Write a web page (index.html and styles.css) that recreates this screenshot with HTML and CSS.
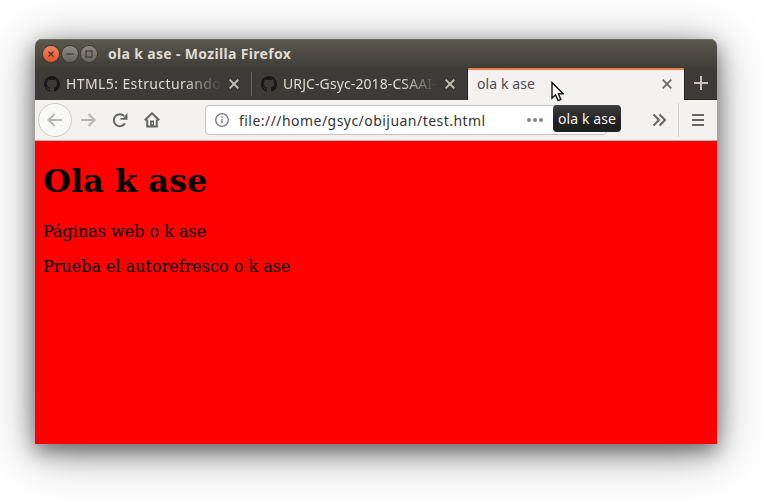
FILE: index.html
```html
<!DOCTYPE html>
<html lang="es">
<head>
<meta charset="utf-8">
<title>ola k ase</title>
<link rel="stylesheet" href="styles.css">
</head>
<body>
<svg width="0" height="0" class="defs">
  <symbol id="github" viewBox="0 0 16 16"><path d="M8 0C3.58 0 0 3.58 0 8c0 3.54 2.29 6.53 5.47 7.59.4.07.55-.17.55-.38 0-.19-.01-.82-.01-1.49-2.01.37-2.53-.49-2.69-.94-.09-.23-.48-.94-.82-1.13-.28-.15-.68-.52-.01-.53.63-.01 1.08.58 1.23.82.72 1.21 1.87.87 2.33.66.07-.52.28-.87.51-1.07-1.78-.2-3.64-.89-3.64-3.95 0-.87.31-1.59.82-2.15-.08-.2-.36-1.02.08-2.12 0 0 .67-.21 2.2.82.64-.18 1.32-.27 2-.27s1.36.09 2 .27c1.53-1.04 2.2-.82 2.2-.82.44 1.1.16 1.92.08 2.12.51.56.82 1.27.82 2.15 0 3.07-1.87 3.75-3.65 3.95.29.25.54.73.54 1.48 0 1.07-.01 1.93-.01 2.2 0 .21.15.46.55.38A8.01 8.01 0 0 0 16 8c0-4.42-3.58-8-8-8z"/></symbol>
  <symbol id="close" viewBox="0 0 10 10"><path d="M.7.7l8.600 8.600M9.300.7L.7 9.300" fill="none" stroke="currentColor" stroke-width="1.800"/></symbol>
</svg>
<div class="window">
  <header class="titlebar">
    <span class="btn btn-close"><svg width="16" height="16"><path d="M5.500 5.500l5 5M10.500 5.500l-5 5"/></svg></span>
    <span class="btn"><svg width="16" height="16"><path d="M4.500 8h7"/></svg></span>
    <span class="btn"><svg width="16" height="16"><rect x="5" y="5" width="6" height="6"/></svg></span>
    <h2 class="title">ola k ase - Mozilla Firefox</h2>
  </header>
  <nav class="tabs">
    <div class="tab">
      <svg class="fav"><use href="#github"/></svg>
      <span class="label label-html">HTML5: Estructurando</span>
      <svg class="x"><use href="#close"/></svg>
    </div>
    <div class="tab tab-second">
      <svg class="fav"><use href="#github"/></svg>
      <span class="label label-urjc">URJC-Gsyc-2018-CSAAI-</span>
      <svg class="x"><use href="#close"/></svg>
    </div>
    <div class="tab active">
      <span class="label">ola k ase</span>
      <svg class="x"><use href="#close"/></svg>
    </div>
    <div class="newtab"><svg width="14" height="14"><path d="M7 0v14M0 7h14" stroke="#c8c3bf" stroke-width="2"/></svg></div>
  </nav>
  <div class="toolbar">
    <span class="back"><svg class="ico faded" viewBox="0 0 16 16"><path d="M15 8H1.500M7.500 2l-6 6 6 6"/></svg></span>
    <svg class="ico faded fwd" viewBox="0 0 16 16"><path d="M1 8h13.500M8.500 2l6 6-6 6"/></svg>
    <svg class="ico reload" viewBox="0 0 16 16"><path d="M13 11.200A6 6 0 1 1 12.200 4"/><path class="solid" d="M15.500.8v7H8.500V6h2.800z"/></svg>
    <svg class="ico home" viewBox="0 0 16 16"><path d="M.8 8.300L8 1.300l7.200 7M3.200 7.500V14.500h9.600V7.500"/><path class="solid" d="M6 8.500h4V15H6z"/><path class="door" d="M8.300 10.500v1.800"/></svg>
    <div class="url">
      <svg class="info" viewBox="0 0 14 14"><circle cx="7" cy="7" r="6.300"/><path d="M7 6v4.500M7 3.300v1.500"/></svg>
      <span class="address">file:///home/gsyc/obijuan/test.html</span>
      <svg class="dots" width="16" height="4"><circle cx="2" cy="2" r="2"/><circle cx="8" cy="2" r="2"/><circle cx="14" cy="2" r="2"/></svg>
    </div>
    <svg class="ico more" viewBox="0 0 14 14"><path d="M1.500 1.500L7 7l-5.500 5.500M7.500 1.500L13 7l-5.500 5.500"/></svg>
    <span class="divider"></span>
    <svg class="menu" width="12" height="12"><path d="M0 1h12M0 6h12M0 11h12"/></svg>
  </div>
  <main class="page">
    <h1>Ola k ase</h1>
    <p>Páginas web o k ase</p>
    <p>Prueba el autorefresco o k ase</p>
  </main>
  <div class="tooltip">ola k ase</div>
  <svg class="cursor" width="13" height="21" viewBox="0 0 13 21"><path d="M1 1.500v15.700l3.500-3.300 2.700 5.700 2.700-1.200-2.500-5.500h4.800z"/></svg>
</div>
</body>
</html>
```
FILE: styles.css
```css
* { box-sizing: border-box; }
body {
  margin: 0;
  height: 502px;
  padding: 39px 45px 58px 35px;
  background: #fff;
  overflow: hidden;
  font-family: "Noto Sans", sans-serif;
}
.defs { position: absolute; }
svg { display: block; flex: none; }
.window {
  position: relative;
  display: flex;
  flex-direction: column;
  width: 682px;
  height: 405px;
  border-radius: 7px 7px 0 0;
  box-shadow: 0 7px 20px rgba(0,0,0,.45), 0 8px 50px rgba(0,0,0,.4);
}
.titlebar {
  display: flex;
  align-items: center;
  gap: 3px;
  height: 29px;
  padding-left: 8px;
  border-radius: 7px 7px 0 0;
  background: linear-gradient(#5b594f, #3e3d38);
  box-shadow: inset 0 1px #6b685e;
}
.btn {
  width: 16px;
  height: 16px;
  border-radius: 50%;
  background: linear-gradient(#8c8a82, #66645d);
  box-shadow: 0 0 0 1px #3a3934;
}
.btn path, .btn rect { fill: none; stroke: #3b3a36; stroke-width: 1.2; }
.btn-close { background: linear-gradient(#f58461, #e45324); }
.title {
  margin: 0 0 0 8px;
  color: #dfdbd2;
  font-size: 14px;
  letter-spacing: .33px;
  line-height: 20px;
  white-space: nowrap;
}
.tabs { display: flex; height: 32px; background: #3c3b37; }
.tab {
  position: relative;
  display: flex;
  align-items: center;
  width: 216px;
  padding: 0 12px 0 9px;
  color: #dfdbd2;
}
.tab:first-child { width: 217px; padding-right: 13px; }
.tab:first-child::after {
  content: "";
  position: absolute;
  right: 0;
  top: 4px;
  width: 1px;
  height: 24px;
  background: #66645f;
}
.fav { width: 16px; height: 16px; fill: #181818; }
.label {
  flex: 1;
  margin: 0 7px 0 6px;
  overflow: hidden;
  white-space: nowrap;
  font-size: 14px;
  line-height: 20px;
}
.label-html { letter-spacing: .4px; }
.label-urjc { letter-spacing: .1px; }
.tab:not(.active) .label { -webkit-mask-image: linear-gradient(to right, #000 76%, transparent); mask-image: linear-gradient(to right, #000 76%, transparent); }
.x { width: 10px; height: 10px; color: #c8c4bd; }
.active {
  padding-bottom: 2px;
  background: #f3f2f1;
  border-top: 2px solid #f07746;
  color: #4c4c4c;
}
.active .label { margin-left: 0; letter-spacing: .1px; }
.tab-second { border-right: 1px solid #252421; }
.active .x { color: #6a6a6a; }
.newtab {
  flex: 1;
  padding: 8px 0 0 9px;
  border-left: 1px solid #252421;
  border-bottom: 1px solid #252421;
}
.toolbar {
  display: flex;
  align-items: center;
  height: 41px;
  padding: 0 13px 1px 3px;
  background: #f3f2f1;
  border-bottom: 1px solid #b8b6b2;
}
.ico { width: 16px; height: 16px; fill: none; stroke: #666; stroke-width: 2; }
.faded { stroke: #b8b7b6; }
.back {
  display: grid;
  place-items: center;
  width: 34px;
  height: 34px;
  border: 1px solid #cfcecd;
  border-radius: 50%;
  background: #f8f8f7;
}
.fwd { margin-left: 8px; }
.reload, .home { margin-left: 16px; }
.ico .solid { fill: #666; stroke: none; }
.door { stroke: #f3f2f1; stroke-width: 1.2; }
.url {
  display: flex;
  align-items: center;
  width: 402px;
  height: 30px;
  margin-left: 45px;
  padding-left: 9px;
  border: 1px solid #c3c1bf;
  border-radius: 4px;
  background: #fff;
}
.info { width: 14px; height: 14px; fill: none; stroke: #777; stroke-width: 1.3; }
.address {
  width: 288px;
  margin: 2px 0 0 10px;
  color: #333;
  font-size: 14px;
  letter-spacing: .46px;
  line-height: 20px;
  white-space: nowrap;
}
.dots { fill: #858585; }
.more { width: 14px; height: 14px; margin-left: 45px; }
.divider { width: 1px; height: 34px; margin-left: 12px; background: #d5d3d1; }
.menu { margin-left: 13px; stroke: #666; stroke-width: 2; }
.page {
  flex: 1;
  padding: 21px 8px 0;
  background: #f00;
  color: #000;
  font-family: "DejaVu Serif", serif;
  font-size: 16px;
  line-height: 19px;
}
.page h1 { margin: 0 0 22px; font-size: 32px; line-height: 38px; }
.page p { margin: 0 0 16px; }
.tooltip {
  position: absolute;
  left: 518px;
  top: 66px;
  width: 68px;
  height: 27px;
  padding-left: 5px;
  border-radius: 4px;
  background: linear-gradient(#3d3d3d, #202020 65%);
  color: #f4f4f4;
  font-size: 14px;
  letter-spacing: .1px;
  line-height: 27px;
  white-space: nowrap;
}
.cursor { position: absolute; left: 516px; top: 42px; fill: #fff; stroke: #000; stroke-width: 1.3; }
```
